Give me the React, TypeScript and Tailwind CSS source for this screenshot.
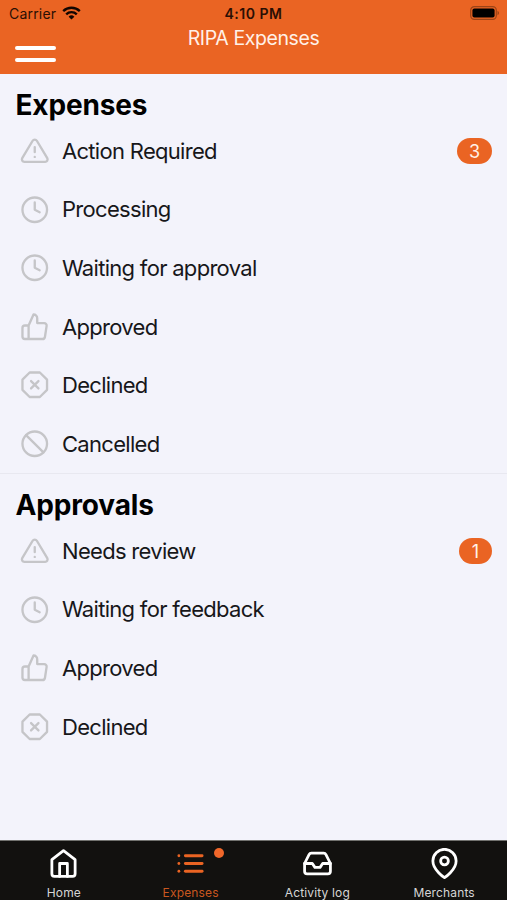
import type { IconType } from 'react-icons'
import {
  FiAlertTriangle,
  FiClock,
  FiHome,
  FiInbox,
  FiList,
  FiMapPin,
  FiSlash,
  FiThumbsUp,
  FiXOctagon,
} from 'react-icons/fi'

interface Row {
  label: string
  icon: IconType
  count?: number
}

interface Tab {
  label: string
  icon: IconType
  active?: boolean
}

const expenses: Row[] = [
  { label: 'Action Required', icon: FiAlertTriangle, count: 3 },
  { label: 'Processing', icon: FiClock },
  { label: 'Waiting for approval', icon: FiClock },
  { label: 'Approved', icon: FiThumbsUp },
  { label: 'Declined', icon: FiXOctagon },
  { label: 'Cancelled', icon: FiSlash },
]

const approvals: Row[] = [
  { label: 'Needs review', icon: FiAlertTriangle, count: 1 },
  { label: 'Waiting for feedback', icon: FiClock },
  { label: 'Approved', icon: FiThumbsUp },
  { label: 'Declined', icon: FiXOctagon },
]

const tabs: Tab[] = [
  { label: 'Home', icon: FiHome },
  { label: 'Expenses', icon: FiList, active: true },
  { label: 'Activity log', icon: FiInbox },
  { label: 'Merchants', icon: FiMapPin },
]

function StatusBar() {
  return (
    <div className="grid h-[26px] grid-cols-3 items-center pl-[9px] pr-[7px] text-[#2a0f04]">
      <div className="flex items-center gap-[6px] text-[14px] tracking-[0.2px]">
        Carrier
        <svg className="h-[14px] w-[19px]" viewBox="0 0 19 14" fill="none" stroke="#120601" strokeWidth="2.4">
          <path d="M1.2 5.1a12 12 0 0 1 16.6 0" />
          <path d="M4.2 8.3a7.6 7.6 0 0 1 10.6 0" />
          <path d="M9.5 13.6 6.6 10.7a4.2 4.2 0 0 1 5.8 0Z" fill="#120601" stroke="none" />
        </svg>
      </div>
      <div className="pr-[2px] text-center text-[14px] font-semibold tracking-[0.5px]">4:10 PM</div>
      <svg className="h-[14px] w-[31px] justify-self-end" viewBox="0 0 31 14">
        <rect x="1.7" y="0.7" width="25.6" height="12.6" rx="3.6" fill="none" stroke="#9c4317" strokeWidth="1.2" />
        <rect x="3.4" y="2.4" width="22.2" height="9.2" rx="2" fill="#000" />
        <path d="M28.5 4.8v4.4q1.6-.8 1.6-2.2t-1.6-2.2Z" fill="#9c4317" />
      </svg>
    </div>
  )
}

function Header() {
  return (
    <header className="h-[74px] shrink-0 bg-[#ea6423]">
      <StatusBar />
      <div className="grid grid-cols-3 px-[15px] pt-[2px]">
        <button className="flex flex-col gap-2 pt-[18px]">
          <span className="h-1 w-[41px] rounded-full bg-white" />
          <span className="h-1 w-[41px] rounded-full bg-white" />
        </button>
        <h1 className="whitespace-nowrap text-center text-[19.5px] leading-[20px] tracking-[-0.4px] text-[#fff1e8]">
          RIPA Expenses
        </h1>
      </div>
    </header>
  )
}

function Section({ title, rows }: { title: string; rows: Row[] }) {
  return (
    <section>
      <h2 className="pl-[15.5px] text-[28px] font-bold leading-[34px] tracking-[-0.15px] text-black">{title}</h2>
      <ul>
        {rows.map(({ label, icon: Icon, count }) => (
          <li key={label} className="flex h-[58.6px] items-center pl-5 pr-[15px]">
            <Icon className="mb-px size-[29.5px] text-[#c5c5c8] [stroke-width:1.9]" />
            <span className="ml-[12.5px] text-[22px] tracking-[-0.7px] text-[#17171a]">{label}</span>
            {count && (
              <span className="ml-auto flex h-[26px] min-w-[33px] items-center justify-center rounded-full bg-[#ea6423] px-3 text-[18px] text-[#fff1e8]">
                {count}
              </span>
            )}
          </li>
        ))}
      </ul>
    </section>
  )
}

function TabBar() {
  return (
    <nav className="grid h-[60px] shrink-0 grid-cols-4 border-t border-[#72726f] bg-[#12110f]">
      {tabs.map(({ label, icon: Icon, active }) => (
        <div
          key={label}
          className={`relative flex flex-col items-center pl-px pt-[7px] ${active ? 'text-[#ea6423]' : 'text-white'}`}
        >
          <Icon className="size-[31px] [stroke-width:2.15]" />
          {active && <span className="absolute left-[87px] top-[7px] size-[10px] rounded-full bg-[#f0672a]" />}
          <span className={`mt-[6px] text-[12px] leading-4 tracking-[0.15px] ${active ? 'text-[#c9571f]' : 'text-[#d6d6d6]'}`}>
            {label}
          </span>
        </div>
      ))}
    </nav>
  )
}

export default function App() {
  return (
    <div className="flex h-[900px] w-[507px] flex-col overflow-hidden bg-[#f3f3fb] font-['Inter',sans-serif]">
      <Header />
      <main className="flex-1">
        <div className="h-[400px] border-b border-[#e8e8f0] pt-[14px]">
          <Section title="Expenses" rows={expenses} />
        </div>
        <div className="pt-[14px]">
          <Section title="Approvals" rows={approvals} />
        </div>
      </main>
      <TabBar />
    </div>
  )
}
